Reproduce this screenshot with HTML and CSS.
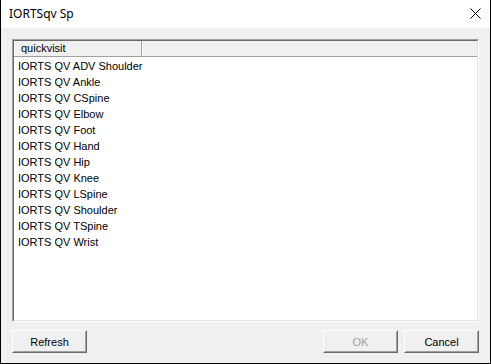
FILE: index.html
```html
<!DOCTYPE html>
<html>
<head>
<meta charset="utf-8">
<link rel="stylesheet" href="styles.css">
</head>
<body>
<div class="window">
  <div class="titlebar">
    <span class="title">IORTSqv Sp</span>
    <svg class="close" width="11" height="11" viewBox="0 0 11 11"><path d="M0.5 0.5 L10.5 10.5 M10.5 0.5 L0.5 10.5" stroke="#000" stroke-width="1" fill="none"/></svg>
  </div>
  <div class="client">
    <div class="listview">
      <div class="lv-inner">
        <div class="lv-header">
          <div class="hcol hcol-first">quickvisit</div>
          <div class="hcol hcol-rest"></div>
        </div>
        <div class="lv-rows">
          <div class="row">IORTS QV ADV Shoulder</div>
          <div class="row">IORTS QV Ankle</div>
          <div class="row">IORTS QV CSpine</div>
          <div class="row">IORTS QV Elbow</div>
          <div class="row">IORTS QV Foot</div>
          <div class="row">IORTS QV Hand</div>
          <div class="row">IORTS QV Hip</div>
          <div class="row">IORTS QV Knee</div>
          <div class="row">IORTS QV LSpine</div>
          <div class="row">IORTS QV Shoulder</div>
          <div class="row">IORTS QV TSpine</div>
          <div class="row">IORTS QV Wrist</div>
        </div>
      </div>
    </div>
    <div class="buttons">
      <div class="btn"><span>Refresh</span></div>
      <div class="spacer"></div>
      <div class="btn disabled"><span>OK</span></div>
      <div class="btn"><span>Cancel</span></div>
    </div>
  </div>
</div>
</body>
</html>
```
FILE: styles.css
```css
html, body {
  margin: 0;
  padding: 0;
  background: #f0f0f0;
}
.window {
  width: 491px;
  height: 364px;
  box-sizing: border-box;
  border: 1px solid #000;
  border-top: none;
  background: #f0f0f0;
  display: flex;
  flex-direction: column;
  font-family: "Liberation Sans", Arial, sans-serif;
  font-size: 11px;
  color: #000;
}
.titlebar {
  height: 28px;
  background: #fff;
  display: flex;
  align-items: center;
  padding-left: 8px;
  position: relative;
}
.title {
  font-family: "Noto Sans", "Open Sans", sans-serif;
  font-size: 12px;
  margin-top: -2px;
}
.close {
  position: absolute;
  left: 469px;
  top: 8px;
}
.client {
  flex: 1;
  padding: 11px 11px 10px 11px;
  display: flex;
  flex-direction: column;
}
.listview {
  height: 283px;
  box-sizing: border-box;
  border: 1px solid;
  border-color: #a0a0a0 #fff #fff #a0a0a0;
}
.lv-inner {
  height: 100%;
  box-sizing: border-box;
  border: 1px solid;
  border-color: #696969 #e3e3e3 #e3e3e3 #696969;
  background: #fff;
}
.lv-header {
  display: flex;
  height: 16px;
  box-sizing: border-box;
  background: #f0f0f0;
  border-bottom: 1px solid #a0a0a0;
}
.hcol {
  box-sizing: border-box;
  line-height: 15px;
}
.hcol-first {
  width: 128px;
  padding-left: 6px;
  border-right: 1px solid #a0a0a0;
  border-left: 1px solid #fff;
}
.hcol-rest {
  flex: 1;
  border-left: 1px solid #fff;
}
.lv-rows {
  padding-top: 1px;
}
.row {
  height: 16px;
  line-height: 16px;
  padding-left: 4px;
  white-space: nowrap;
}
.buttons {
  margin-top: 8px;
  display: flex;
  gap: 6px;
  padding-right: 0;
}
.spacer {
  flex: 1;
}
.btn {
  width: 75px;
  height: 23px;
  box-sizing: border-box;
  border: 1px solid;
  border-color: #fff #696969 #696969 #fff;
  background: #f0f0f0;
  display: flex;
}
.btn span {
  flex: 1;
  border: 1px solid;
  border-color: #f0f0f0 #a0a0a0 #a0a0a0 #f0f0f0;
  display: flex;
  align-items: center;
  justify-content: center;
  font-size: 11px;
  padding-top: 1px;
}
.btn.disabled span {
  color: #a0a0a0;
}
```
